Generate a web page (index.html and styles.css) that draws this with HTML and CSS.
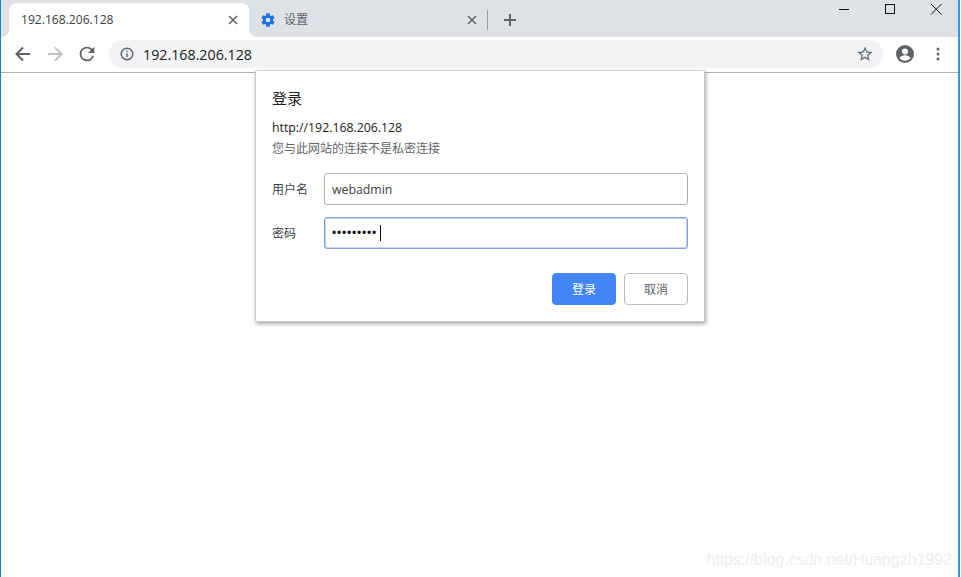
FILE: index.html
```html
<!DOCTYPE html>
<html lang="zh">
<head>
<meta charset="utf-8">
<title>192.168.206.128</title>
<link rel="stylesheet" href="styles.css">
</head>
<body>
<div class="window">
  <header class="tabstrip">
    <div class="tab active">
      <span class="tab-title">192.168.206.128</span>
      <svg class="tab-close" width="10" height="10" viewBox="0 0 10 10"><path d="M1 1L9 9M9 1L1 9" stroke="#5f6368" stroke-width="1.6" fill="none"/></svg>
    </div>
    <div class="tab inactive">
      <svg class="gear" width="16" height="16" viewBox="0 0 24 24"><path fill="#1a73e8" d="M19.4 13c.04-.32.1-.66.1-1s-.06-.68-.1-1l2.1-1.65c.2-.15.25-.42.12-.64l-2-3.46c-.12-.22-.39-.3-.61-.22l-2.49 1c-.52-.4-1.08-.73-1.69-.98l-.38-2.65A.49.49 0 0 0 14 2h-4c-.25 0-.46.18-.49.42l-.38 2.65c-.61.25-1.17.59-1.69.98l-2.49-1a.5.5 0 0 0-.61.22l-2 3.46c-.13.22-.07.49.12.64L4.6 11c-.04.32-.1.66-.1 1s.06.68.1 1l-2.1 1.65c-.2.15-.25.42-.12.64l2 3.46c.12.22.39.3.61.22l2.49-1c.52.4 1.08.73 1.69.98l.38 2.65c.03.24.24.42.49.42h4c.25 0 .46-.18.49-.42l.38-2.65c.61-.25 1.17-.59 1.69-.98l2.49 1c.23.09.49 0 .61-.22l2-3.46c.12-.22.07-.49-.12-.64L19.4 13zM12 15.5a3.5 3.5 0 1 1 0-7 3.5 3.5 0 0 1 0 7z"/></svg>
      <span class="tab-title muted">设置</span>
      <svg class="tab-close" width="10" height="10" viewBox="0 0 10 10"><path d="M1 1L9 9M9 1L1 9" stroke="#5f6368" stroke-width="1.6" fill="none"/></svg>
    </div>
    <span class="tab-sep"></span>
    <svg class="newtab" width="14" height="14" viewBox="0 0 14 14"><path d="M7 1V13M1 7H13" stroke="#5f6368" stroke-width="2" fill="none"/></svg>
    <div class="win-controls">
      <svg width="46" height="18" viewBox="0 0 46 18"><path d="M18 9.500H28" stroke="#111" stroke-width="1" fill="none"/></svg>
      <svg width="46" height="18" viewBox="0 0 46 18"><rect x="18.500" y="4.500" width="9" height="9" stroke="#111" stroke-width="1" fill="none"/></svg>
      <svg width="46" height="18" viewBox="0 0 46 18"><path d="M18 4L28.500 14.500M28.500 4L18 14.500" stroke="#111" stroke-width="1" fill="none"/></svg>
    </div>
  </header>

  <nav class="toolbar">
    <svg class="nav-btn" width="16" height="16" viewBox="0 0 16 16"><path d="M15 8H2M8 1.500L1.500 8L8 14.500" stroke="#5f6368" stroke-width="2" fill="none"/></svg>
    <svg class="nav-btn" width="16" height="16" viewBox="0 0 16 16"><path d="M1 8H14M8 1.500L14.500 8L8 14.500" stroke="#bdc1c6" stroke-width="2" fill="none"/></svg>
    <svg class="reload" width="22" height="22" viewBox="0 0 24 24"><path fill="#5f6368" d="M17.650 6.350A7.960 7.960 0 0 0 12 4a8 8 0 1 0 7.730 10h-2.080A6 6 0 1 1 12 6c1.660 0 3.140.69 4.220 1.780L13 11h7V4l-2.350 2.350z"/></svg>
    <div class="omnibox">
      <svg width="14" height="14" viewBox="0 0 14 14"><circle cx="7" cy="7" r="5.800" stroke="#5f6368" stroke-width="1.400" fill="none"/><path d="M7 6.200V10.200M7 3.700V5" stroke="#5f6368" stroke-width="1.400" fill="none"/></svg>
      <span class="url">192.168.206.128</span>
      <svg class="star" width="18" height="18" viewBox="0 0 24 24"><path fill="#5f6368" d="M22 9.240l-7.190-.62L12 2 9.190 8.630 2 9.240l5.460 4.730L5.820 21 12 17.270 18.180 21l-1.630-7.030L22 9.240zM12 15.400l-3.760 2.270 1-4.280-3.320-2.880 4.380-.38L12 6.100l1.710 4.040 4.380.38-3.320 2.880 1 4.280L12 15.400z"/></svg>
    </div>
    <svg class="avatar" width="20" height="20" viewBox="0 0 20 20"><circle cx="10" cy="10" r="9" fill="#5f6368"/><circle cx="10" cy="7.500" r="3" fill="#fff"/><path d="M4.500 14c1.200-1.900 3.300-2.700 5.500-2.700s4.300.8 5.500 2.700c-1.300 1.700-3.300 2.700-5.500 2.700S5.800 15.700 4.500 14z" fill="#fff"/></svg>
    <svg class="menu" width="4" height="14" viewBox="0 0 4 14"><circle cx="2" cy="2" r="1.500" fill="#5f6368"/><circle cx="2" cy="7" r="1.500" fill="#5f6368"/><circle cx="2" cy="12" r="1.500" fill="#5f6368"/></svg>
  </nav>

  <main class="page">
    <span class="watermark">https://blog.csdn.net/Huangzh1992</span>
  </main>

  <form class="dialog">
    <h1 class="dialog-title">登录</h1>
    <p class="origin">http://192.168.206.128</p>
    <p class="notice">您与此网站的连接不是私密连接</p>
    <div class="fields">
      <div class="field-label">用户名</div>
      <div class="input">webadmin</div>
      <div class="field-label">密码</div>
      <div class="input focused"><span class="dots">•••••••••</span><span class="caret"></span></div>
    </div>
    <div class="actions">
      <div class="btn primary">登录</div>
      <div class="btn">取消</div>
    </div>
  </form>
</div>
</body>
</html>
```

FILE: styles.css
```css
* { box-sizing: border-box; }
html, body { margin: 0; padding: 0; height: 100%; overflow: hidden; background: #fff; }
body { font-family: "Open Sans", "Noto Sans CJK SC", sans-serif; }

.window {
  position: relative;
  width: 960px;
  height: 577px;
  display: flex;
  flex-direction: column;
  border-left: 1px solid #1683d8;
  border-right: 2px solid #3a96e2;
}

.tabstrip {
  height: 37px;
  flex: none;
  display: flex;
  align-items: flex-start;
  background: #dee1e6;
  padding: 3px 0 0 8px;
}
.tab {
  position: relative;
  width: 240px;
  height: 34px;
  flex: none;
  display: flex;
  align-items: center;
  padding: 0 11px 0 12px;
  font-size: 12.100px;
  color: #3c4043;
}
.tab.active { background: #fff; border-radius: 8px 8px 0 0; }
.tab.active::before,
.tab.active::after {
  content: "";
  position: absolute;
  bottom: 0;
  width: 8px;
  height: 8px;
}
.tab.active::before { left: -8px; background: radial-gradient(circle at 0 0, transparent 7.500px, #fff 8.500px); }
.tab.active::after { right: -8px; background: radial-gradient(circle at 100% 0, transparent 7.500px, #fff 8.500px); z-index: 1; }
.tab.inactive { width: 239px; padding-left: 11px; }
.tab-title { flex: 1; white-space: nowrap; line-height: 34px; }
.tab-title.muted { color: #5f6368; }
.gear { margin-right: 8px; flex: none; }
.tab-sep { width: 1px; height: 20px; margin: 7px 0 0 -1px; background: #9aa0a6; flex: none; }
.newtab { margin: 10px 0 0 15px; flex: none; }
.win-controls { margin-left: auto; display: flex; margin-right: -1px; margin-top: -3px; }
.win-controls svg { display: block; }

.toolbar {
  height: 36px;
  flex: none;
  display: flex;
  align-items: center;
  background: #fff;
  border-bottom: 1px solid #b0b0b0;
  padding: 0 0 1px 14px;
}
.nav-btn { flex: none; margin-right: 16px; }
.reload { flex: none; margin-left: -3px; margin-right: 15px; }
.omnibox {
  width: 774px;
  height: 28px;
  margin-left: -4px;
  flex: none;
  display: flex;
  align-items: center;
  gap: 9px;
  padding: 0 9px 0 11px;
  border-radius: 14px;
  background: #f1f3f4;
}
.url { flex: 1; font-size: 14.250px; color: #202124; }
.avatar { flex: none; margin-left: 12px; }
.menu { flex: none; margin-left: 21px; }

.page { flex: 1; position: relative; background: #fff; }
.watermark {
  position: absolute;
  right: 6px;
  bottom: 8px;
  font-family: "Liberation Sans", sans-serif;
  font-size: 15.900px;
  color: #efefef;
}

.dialog {
  position: absolute;
  left: 254px;
  top: 70px;
  width: 450px;
  height: 252px;
  background: #fff;
  border: 1px solid #c8c8c8;
  border-top-color: #d4d4d4;
  border-radius: 2px;
  box-shadow: 1px 2px 4px rgba(0, 0, 0, .35);
  padding: 16px;
  color: #202124;
}
.dialog-title { margin: 0; font-size: 15px; font-weight: 400; line-height: 22px; }
.origin { margin: 9px 0 0; font-size: 12.300px; line-height: 20px; }
.notice { margin: 1px 0 0; font-size: 12px; line-height: 20px; color: #5f6368; }
.fields {
  margin-top: 14px;
  display: grid;
  grid-template-columns: 52px 1fr;
  row-gap: 12px;
  align-items: center;
}
.field-label { font-size: 12px; color: #3c4043; }
.input {
  height: 32px;
  border: 1px solid #b0b0b0;
  border-radius: 3px;
  padding: 0 7px;
  display: flex;
  align-items: center;
  font-size: 12.300px;
  color: #3c4043;
}
.input.focused { border: 1px solid #7d9fe0; box-shadow: 0 0 0 1px rgba(125, 159, 224, .45) inset; color: #111; }
.dots { font-size: 12px; letter-spacing: .8px; font-family: "Liberation Sans", sans-serif; }
.caret { width: 1px; height: 16px; background: #111; margin-left: 3px; }
.actions { margin-top: 24px; display: flex; justify-content: flex-end; gap: 8px; }
.btn {
  width: 64px;
  height: 32px;
  border: 1px solid #bdbdbd;
  border-radius: 4px;
  display: flex;
  align-items: center;
  justify-content: center;
  font-size: 12px;
  color: #5f6368;
  background: #fff;
}
.btn.primary { background: #4285f4; border-color: #4285f4; color: #fff; }
```
